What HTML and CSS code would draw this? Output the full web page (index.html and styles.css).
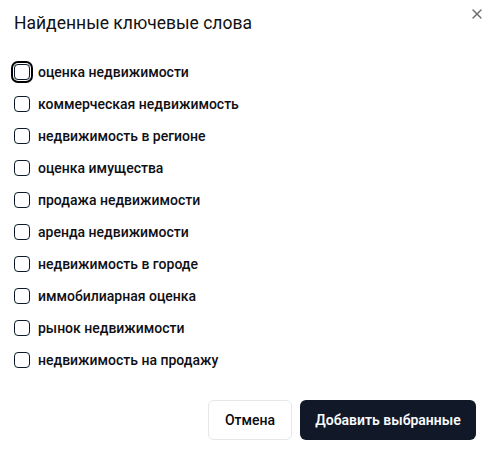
FILE: index.html
```html
<!DOCTYPE html>
<html lang="ru">
<head>
<meta charset="utf-8">
<link rel="stylesheet" href="styles.css">
</head>
<body>
<div class="dialog">
  <button class="close" aria-label="Закрыть">
    <svg width="16" height="16" viewBox="0 0 24 24" fill="none" stroke="currentColor" stroke-width="2" stroke-linecap="round" stroke-linejoin="round"><path d="M18 6 6 18"/><path d="m6 6 12 12"/></svg>
  </button>
  <h2 class="title">Найденные ключевые слова</h2>
  <ul class="list">
    <li class="row"><span class="box focus"></span><span class="label">оценка недвижимости</span></li>
    <li class="row"><span class="box"></span><span class="label">коммерческая недвижимость</span></li>
    <li class="row"><span class="box"></span><span class="label">недвижимость в регионе</span></li>
    <li class="row"><span class="box"></span><span class="label">оценка имущества</span></li>
    <li class="row"><span class="box"></span><span class="label">продажа недвижимости</span></li>
    <li class="row"><span class="box"></span><span class="label">аренда недвижимости</span></li>
    <li class="row"><span class="box"></span><span class="label">недвижимость в городе</span></li>
    <li class="row"><span class="box"></span><span class="label">иммобилиарная оценка</span></li>
    <li class="row"><span class="box"></span><span class="label">рынок недвижимости</span></li>
    <li class="row"><span class="box"></span><span class="label">недвижимость на продажу</span></li>
  </ul>
  <div class="footer">
    <button class="btn outline">Отмена</button>
    <button class="btn primary">Добавить выбранные</button>
  </div>
</div>
</body>
</html>
```

FILE: styles.css
```css
* { box-sizing: border-box; }
html, body { margin: 0; padding: 0; background: #fff; }
body {
  font-family: Roboto, "Noto Sans", sans-serif;
  color: #0a0a0a;
  width: 495px;
  height: 451px;
  overflow: hidden;
}
.dialog {
  position: relative;
  padding: 13px 19px 0 14px;
}
.close {
  position: absolute;
  top: 6px;
  right: 10px;
  width: 16px;
  height: 16px;
  padding: 0;
  border: 0;
  background: none;
  color: #6b6b6b;
  display: flex;
}
.title {
  margin: 0;
  font-size: 17.5px;
  line-height: 21px;
  font-weight: 400;
  color: #111;
}
.list {
  list-style: none;
  margin: 28px 0 0;
  padding: 0;
  display: flex;
  flex-direction: column;
  gap: 12px;
}
.row {
  display: flex;
  align-items: center;
  gap: 8px;
  height: 20px;
}
.box {
  width: 16px;
  height: 16px;
  border: 1px solid #0f172a;
  border-radius: 4px;
  flex: none;
}
.box.focus {
  box-shadow: 0 0 0 1px #fff, 0 0 0 3px #000;
}
.label {
  font-size: 14px;
  font-weight: 500;
  line-height: 20px;
  color: #0f0f14;
}
.footer {
  display: flex;
  justify-content: flex-end;
  gap: 8px;
  margin-top: 30px;
}
.btn {
  height: 40px;
  border-radius: 6px;
  font-family: inherit;
  font-size: 14px;
  font-weight: 500;
  padding: 0;
  white-space: nowrap;
  cursor: pointer;
}
.outline {
  width: 84px;
  background: #fff;
  border: 1px solid #e5e7eb;
  color: #0a0a0a;
}
.primary {
  width: 176px;
  background: #111827;
  border: 0;
  color: #f8fafc;
  font-weight: 600;
}
```
